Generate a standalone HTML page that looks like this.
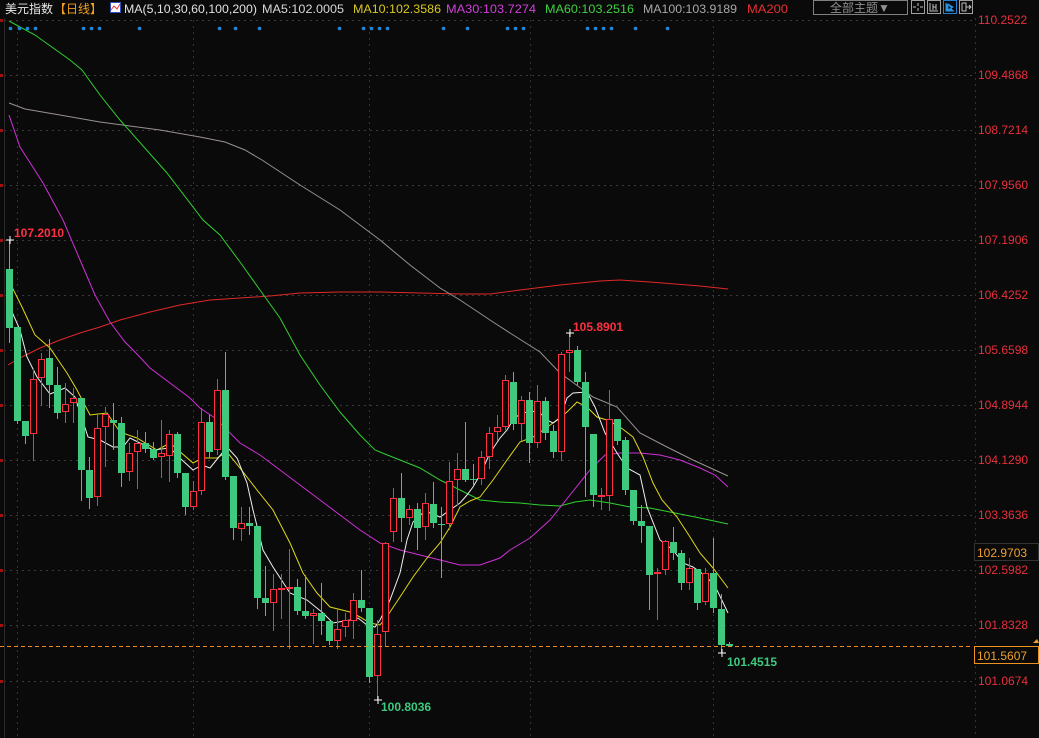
<!DOCTYPE html>
<html><head><meta charset="utf-8"><style>
html,body{margin:0;padding:0;background:#0a0a0a;width:1039px;height:738px;overflow:hidden}
svg{display:block}
text{font-family:"Liberation Sans","Noto Sans CJK SC",sans-serif}
</style></head><body>
<svg id="c" width="1039" height="738" xmlns="http://www.w3.org/2000/svg">
<rect width="1039" height="738" fill="#0a0a0a"/>
<g id="grid"></g>
<g id="ma"></g>
<g id="cd"></g>
<!-- header -->
<text x="5" y="13" font-size="12" fill="#e8e8e8">美元指数</text>
<text x="54" y="13" font-size="12" fill="#f0a020">【日线】</text>
<rect x="110.5" y="2.5" width="10" height="10" fill="#fff" stroke="#3050c0"/>
<polyline points="111,10 114,6 117,9 120,4" fill="none" stroke="#e03030" stroke-width="1"/>
<text x="124" y="13" font-size="12" fill="#e0e0e0" textLength="133" lengthAdjust="spacingAndGlyphs">MA(5,10,30,60,100,200)</text>
<text x="262" y="13" font-size="12" fill="#d8d8d8" textLength="82" lengthAdjust="spacingAndGlyphs">MA5:102.0005</text>
<text x="353" y="13" font-size="12" fill="#d8c820" textLength="88" lengthAdjust="spacingAndGlyphs">MA10:102.3586</text>
<text x="446" y="13" font-size="12" fill="#d040d8" textLength="90" lengthAdjust="spacingAndGlyphs">MA30:103.7274</text>
<text x="545" y="13" font-size="12" fill="#40d040" textLength="89" lengthAdjust="spacingAndGlyphs">MA60:103.2516</text>
<text x="643" y="13" font-size="12" fill="#a8a8a8" textLength="94" lengthAdjust="spacingAndGlyphs">MA100:103.9189</text>
<text x="747" y="13" font-size="12" fill="#e83030" textLength="41" lengthAdjust="spacingAndGlyphs">MA200</text>
<rect x="813.5" y="0.5" width="94" height="14" fill="none" stroke="#808080"/>
<text x="830" y="12" font-size="12" fill="#909090">全部主题▼</text>
<rect x="911.5" y="0.5" width="13" height="13" fill="none" stroke="#a0a0a0"/>
<path d="M918 3v3M918 8v3M913 7h3M920 7h3" stroke="#c0c0c0"/>
<rect x="927.5" y="0.5" width="13" height="13" fill="none" stroke="#a0a0a0"/>
<path d="M930 3v8h8M933 4v6M936 4v6M933 7h3" stroke="#c0c0c0" fill="none"/>
<rect x="943.5" y="0.5" width="13" height="13" fill="none" stroke="#2a80d0"/>
<path d="M946 3v8h8M948 4l5 3-5 3z" stroke="#2a90e0" fill="#2a90e0"/>
<rect x="959.5" y="0.5" width="13" height="13" fill="none" stroke="#a0a0a0"/>
<path d="M962 3v8M962 3h4v8h-4M966 7h5M969 5l2 2-2 2" stroke="#c0c0c0" fill="none"/>
<g id="dots" fill="#1e88d8"></g>
<g id="lab" font-size="12" fill="#e8303a"></g>
<line x1="0" y1="646.5" x2="972" y2="646.5" stroke="#f08a20" stroke-dasharray="4,3"/>
<rect x="974.5" y="646.5" width="64" height="17" fill="#0a0a0a" stroke="#f09020"/>
<text x="977" y="660" font-size="12" fill="#f0a030">101.5607</text>
<rect x="974.5" y="543.5" width="64" height="17" fill="#0a0a0a" stroke="#333"/>
<text x="977" y="557" font-size="12" fill="#f0a030">102.9703</text>
<path d="M1033 643l4-4 2 4z" fill="#f0a030"/>
<text x="14" y="237" font-size="12" font-weight="bold" fill="#ff3040">107.2010</text>
<path d="M6 240h8M10 236v8" stroke="#fff"/>
<text x="573" y="331" font-size="12" font-weight="bold" fill="#ff3040">105.8901</text>
<path d="M566 333h8M570 329v8" stroke="#fff"/>
<text x="381" y="711" font-size="12" font-weight="bold" fill="#3ec97e">100.8036</text>
<path d="M374 700h8M378 696v8" stroke="#fff"/>
<text x="727" y="666" font-size="12" font-weight="bold" fill="#3ec97e">101.4515</text>
<path d="M718 653h8M722 649v8" stroke="#fff"/>
</svg>
<script>
var NS="http://www.w3.org/2000/svg";
function el(p,t,a){var e=document.createElementNS(NS,t);for(var k in a)e.setAttribute(k,a[k]);p.appendChild(e);return e;}
var g=document.getElementById('grid');
var ys=[20,75,130,185,240,295,350,405,460,515,570,625,681];
var labs=["110.2522","109.4868","108.7214","107.9560","107.1906","106.4252","105.6598","104.8944","104.1290","103.3636","102.5982","101.8328","101.0674"];
ys.forEach(function(y,i){
 el(g,'line',{x1:4,y1:y+.5,x2:972,y2:y+.5,stroke:'#3a3a3a','stroke-dasharray':'2,4'});
 el(g,'rect',{x:0,y:y-1,width:3,height:3,fill:'#a01010'});
 var t=el(document.getElementById('lab'),'text',{x:978,y:y+4});t.textContent=labs[i];
});
[17,193,369,530,713].forEach(function(x){el(g,'line',{x1:x+.5,y1:20,x2:x+.5,y2:738,stroke:'#333','stroke-dasharray':'2,4'});});
el(g,'line',{x1:4.5,y1:18,x2:4.5,y2:738,stroke:'#2a2a2a'});
el(g,'line',{x1:975.5,y1:18,x2:975.5,y2:738,stroke:'#333','stroke-dasharray':'2,4'});
var d=document.getElementById('dots');
[10,19,27,35,83,91,99,139,219,235,259,339,363,371,379,387,443,467,507,515,523,587,595,603,611,635,667].forEach(function(x){el(d,'circle',{cx:x+.5,cy:28.5,r:1.8});});
var ma=document.getElementById('ma');
function pl(pts,c){el(ma,'polyline',{points:pts,fill:'none',stroke:c,'stroke-width':1});}
pl("8,365 20,358 40,348 60,340 80,333 100,327 120,320 150,312 180,305 210,300 240,298 270,296 300,293 340,292 380,292 420,293 460,294 490,294 520,290 560,285 600,281 620,280 650,282 700,286 728,289","#e02828");
pl("9,103 25,109 60,115 100,122 160,130 200,137 225,142 245,150 262,160 300,185 340,210 380,240 410,265 440,288 460,300 490,320 510,333 540,352 560,373 593,397 617,407 640,433 667,447 693,460 728,476","#9a9090");
pl("9,21 35,35 70,60 82,70 100,95 120,120 167,173 203,220 220,235 240,262 260,290 280,318 300,355 320,385 340,412 360,435 375,450 400,460 420,468 440,480 460,490 480,500 500,502 520,503 540,505 560,506 575,502 590,500 610,503 630,507 650,508 670,512 700,518 728,524","#30d030");
pl("9,115 20,147 43,183 63,220 80,260 95,295 110,322 125,342 135,352 150,368 170,383 190,398 200,408 215,418 225,428 240,443 260,455 280,470 300,485 320,500 340,515 360,530 380,543 400,550 420,555 440,560 460,565 480,565 500,558 510,550 530,538 550,520 570,495 590,470 605,455 620,453 640,453 660,455 680,460 700,468 715,475 728,487","#d030d8");
pl("9,281 22,307 35,335 50,348 67,373 77,390 90,415 107,413 120,432 137,438 157,450 170,443 193,463 203,458 217,458 227,452 240,468 257,490 273,510 290,543 303,573 317,593 330,607 350,612 360,617 370,623 380,625 390,612 400,597 413,577 427,558 440,543 450,527 460,507 470,501 480,497 493,480 507,460 520,442 533,437 553,423 567,412 577,402 587,407 597,417 607,420 620,427 633,437 643,457 653,483 662,500 677,517 690,537 700,553 713,568 728,588","#e0d818");
pl("9,305 20,330 27,357 37,377 50,394 65,388 75,397 88,437 100,440 113,447 123,447 130,438 140,443 153,450 170,448 182,460 193,470 202,465 210,468 227,447 237,458 247,483 253,510 263,550 273,567 290,593 307,600 323,613 333,623 350,620 358,618 367,625 375,627 380,620 390,600 400,573 407,540 413,522 425,511 440,517 450,510 460,503 467,495 473,487 480,475 490,453 500,438 507,430 513,420 522,412 530,413 537,410 547,420 553,423 560,418 567,398 573,393 587,392 595,407 605,433 617,453 627,468 640,475 647,507 660,540 673,550 683,563 693,567 707,577 717,590 728,613","#f0f0f0");
var C=[
['g',269,328,240,343],['g',327,421,327,424],['g',421,436,421,444],['r',379,434,369,461],['r',359,378,353,406],['g',358,385,339,408],['g',385,413,367,419],['r',404,412,383,423],['r',398,403,388,423],['g',398,470,398,501],
['g',470,498,457,509],['r',428,497,413,506],['r',414,427,407,467],['g',420,423,403,450],['g',423,473,417,487],['r',453,472,443,481],['r',443,452,430,489],['g',443,449,432,453],['g',449,458,442,460],['r',453,457,420,478],
['r',434,456,430,482],['g',434,473,432,478],['g',473,507,473,515],['r',491,507,481,510],['r',422,491,408,495],['g',422,452,415,458],['r',390,450,379,455],['g',390,477,352,480],['g',476,528,476,540],['r',523,529,507,541],
['g',523,526,507,535],['g',526,598,526,609],['g',598,603,566,616],['r',589,603,574,631],['r',588,589,574,619],['r',587,589,549,649],['g',587,611,579,615],['g',611,616,575,619],['r',613,616,609,644],['g',613,621,583,635],
['g',621,641,621,645],['r',629,641,609,649],['r',620,627,613,637],['r',600,621,593,639],['g',600,608,570,612],['g',608,677,608,683],['r',634,676,620,700],['r',543,632,542,646],['r',498,532,488,542],['g',498,518,473,542],
['r',509,518,505,525],['g',509,528,503,550],['r',503,527,493,540],['g',504,523,482,528],['g',524,525,507,578],['r',481,524,462,530],['r',469,480,453,505],['g',469,480,422,482],['g',479,480,464,486],['r',457,479,451,485],
['r',433,457,427,469],['r',427,432,415,441],['r',380,427,375,430],['g',382,424,372,430],['r',400,424,396,441],['g',400,443,392,463],['r',401,443,385,448],['g',401,433,397,440],['g',431,452,425,458],['r',354,452,352,461],
['r',350,353,333,372],['g',350,382,346,385],['g',382,427,372,497],['g',434,495,434,507],['r',495,496,488,510],['r',419,496,390,511],['g',419,441,419,445],['g',440,490,437,495],['g',490,521,490,525],['g',521,526,505,543],
['g',526,575,526,610],['r',572,574,568,620],['r',541,570,540,575],['g',542,553,527,560],['g',553,583,550,590],['r',568,583,558,590],['g',569,603,569,610],['r',573,602,568,605],['g',573,608,538,613],['g',609,645,594,653],
['g',644,646,642,647]];
var cd=document.getElementById('cd');
C.forEach(function(c,i){
 var x=9.5+8*i, col=c[0]=='g'?'#3ec97e':'#ff3040';
 el(cd,'line',{x1:x,y1:c[3],x2:x,y2:c[4],stroke:col});
 var h=Math.max(1,c[2]-c[1]);
 if(c[0]=='g') el(cd,'rect',{x:x-3.5,y:c[1],width:7,height:h,fill:col});
 else el(cd,'rect',{x:x-3,y:c[1]+.5,width:6,height:Math.max(1,h-1),fill:'#0a0a0a',stroke:col});
});
</script>
</body></html>
